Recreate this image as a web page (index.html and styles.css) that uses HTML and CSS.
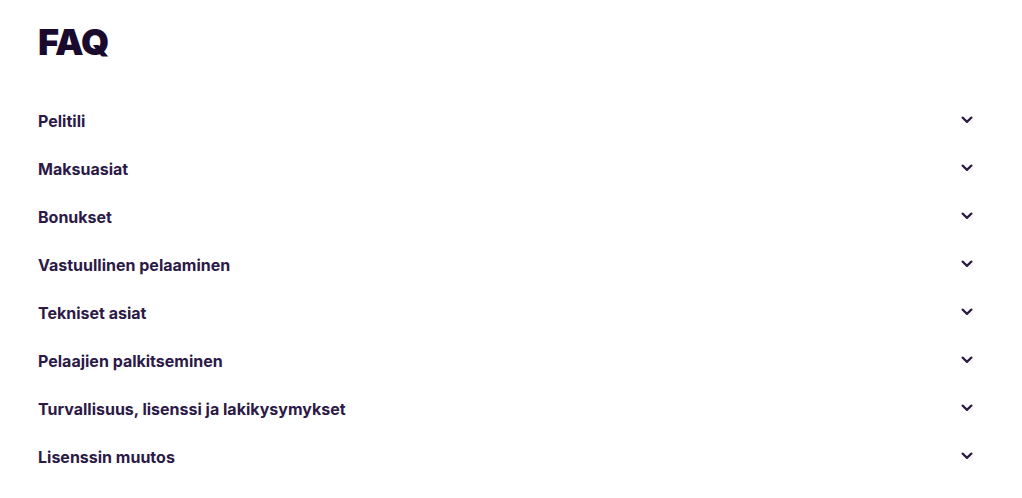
FILE: index.html
```html
<!DOCTYPE html>
<html lang="fi">
<head>
<meta charset="utf-8">
<title>FAQ</title>
<link rel="stylesheet" href="styles.css">
</head>
<body>
<main class="faq">
  <h1 class="faq-title">FAQ</h1>
  <ul class="faq-list">
    <li class="faq-item"><span>Pelitili</span><svg class="chev" viewBox="0 0 12 7"><path d="M1 1 6 5.8 11 1"/></svg></li>
    <li class="faq-item"><span>Maksuasiat</span><svg class="chev" viewBox="0 0 12 7"><path d="M1 1 6 5.8 11 1"/></svg></li>
    <li class="faq-item"><span>Bonukset</span><svg class="chev" viewBox="0 0 12 7"><path d="M1 1 6 5.8 11 1"/></svg></li>
    <li class="faq-item"><span>Vastuullinen pelaaminen</span><svg class="chev" viewBox="0 0 12 7"><path d="M1 1 6 5.8 11 1"/></svg></li>
    <li class="faq-item"><span>Tekniset asiat</span><svg class="chev" viewBox="0 0 12 7"><path d="M1 1 6 5.8 11 1"/></svg></li>
    <li class="faq-item"><span>Pelaajien palkitseminen</span><svg class="chev" viewBox="0 0 12 7"><path d="M1 1 6 5.8 11 1"/></svg></li>
    <li class="faq-item"><span>Turvallisuus, lisenssi ja lakikysymykset</span><svg class="chev" viewBox="0 0 12 7"><path d="M1 1 6 5.8 11 1"/></svg></li>
    <li class="faq-item"><span>Lisenssin muutos</span><svg class="chev" viewBox="0 0 12 7"><path d="M1 1 6 5.8 11 1"/></svg></li>
  </ul>
</main>
</body>
</html>
```
FILE: styles.css
```css
* { box-sizing: border-box; }
html, body { margin: 0; padding: 0; background: #fff; }
body { font-family: Inter, "Noto Sans", sans-serif; color: #2c1a46; }
.faq { padding: 19px 49px 0 38px; }
.faq-title {
  margin: 0 0 32px;
  font-size: 36px;
  font-weight: 900;
  line-height: 46px;
  letter-spacing: -0.8px;
  color: #1a0b2e;
}
.faq-list { list-style: none; margin: 0; padding: 0; }
.faq-item {
  display: flex;
  align-items: center;
  justify-content: space-between;
  height: 48px;
  font-size: 16px;
  font-weight: 700;
}
.chev { width: 12px; height: 7px; fill: none; stroke: #2c1a46; stroke-width: 2.4; margin-top: -3px; }
```
